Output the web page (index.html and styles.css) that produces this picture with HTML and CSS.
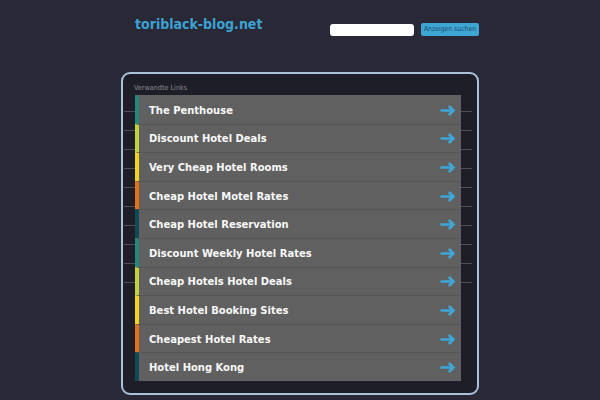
FILE: index.html
```html
<!DOCTYPE html>
<html lang="de">
<head>
<meta charset="utf-8">
<title>toriblack-blog.net</title>
<link rel="stylesheet" href="styles.css">
</head>
<body>
<div class="page">
  <header class="header">
    <div class="title">toriblack-blog.net</div>
    <form class="search">
      <input class="search-input" type="text">
      <button class="search-btn" type="button">Anzeigen suchen</button>
    </form>
  </header>
  <main class="box">
    <div class="label">Verwandte Links</div>
    <div class="lines">
      <ul class="list">
        <li class="row c1"><span class="txt">The Penthouse</span><svg class="arrow" viewBox="0 0 16 11"><path d="M0.5 5.5H13.5M8.8 1L13.5 5.5L8.8 10"/></svg></li>
        <li class="row c2"><span class="txt">Discount Hotel Deals</span><svg class="arrow" viewBox="0 0 16 11"><path d="M0.5 5.5H13.5M8.8 1L13.5 5.5L8.8 10"/></svg></li>
        <li class="row c3"><span class="txt">Very Cheap Hotel Rooms</span><svg class="arrow" viewBox="0 0 16 11"><path d="M0.5 5.5H13.5M8.8 1L13.5 5.5L8.8 10"/></svg></li>
        <li class="row c4"><span class="txt">Cheap Hotel Motel Rates</span><svg class="arrow" viewBox="0 0 16 11"><path d="M0.5 5.5H13.5M8.8 1L13.5 5.5L8.8 10"/></svg></li>
        <li class="row c5"><span class="txt">Cheap Hotel Reservation</span><svg class="arrow" viewBox="0 0 16 11"><path d="M0.5 5.5H13.5M8.8 1L13.5 5.5L8.8 10"/></svg></li>
        <li class="row c1"><span class="txt">Discount Weekly Hotel Rates</span><svg class="arrow" viewBox="0 0 16 11"><path d="M0.5 5.5H13.5M8.8 1L13.5 5.5L8.8 10"/></svg></li>
        <li class="row c2"><span class="txt">Cheap Hotels Hotel Deals</span><svg class="arrow" viewBox="0 0 16 11"><path d="M0.5 5.5H13.5M8.8 1L13.5 5.5L8.8 10"/></svg></li>
        <li class="row c3"><span class="txt">Best Hotel Booking Sites</span><svg class="arrow" viewBox="0 0 16 11"><path d="M0.5 5.5H13.5M8.8 1L13.5 5.5L8.8 10"/></svg></li>
        <li class="row c4"><span class="txt">Cheapest Hotel Rates</span><svg class="arrow" viewBox="0 0 16 11"><path d="M0.5 5.5H13.5M8.8 1L13.5 5.5L8.8 10"/></svg></li>
        <li class="row c5"><span class="txt">Hotel Hong Kong</span><svg class="arrow" viewBox="0 0 16 11"><path d="M0.5 5.5H13.5M8.8 1L13.5 5.5L8.8 10"/></svg></li>
      </ul>
    </div>
  </main>
</div>
</body>
</html>
```
FILE: styles.css
```css
html, body {
  margin: 0;
  padding: 0;
  background: #282837;
  font-family: "DejaVu Sans Condensed", "DejaVu Sans", sans-serif;
}
.page {
  width: 358px;
  margin: 0 auto;
}
.header {
  display: flex;
  height: 72px;
}
.title {
  margin-left: 14px;
  padding-top: 14px;
  font-size: 14px;
  line-height: 20px;
  font-weight: bold;
  color: #3da2d2;
}
.search {
  margin: 0 0 0 auto;
  padding-top: 23px;
  display: flex;
  align-items: flex-start;
  gap: 7px;
}
.search-input {
  margin-top: 1px;
  width: 84px;
  height: 12px;
  border: 0;
  padding: 0;
  border-radius: 3px;
  background: #fff;
}
.search-btn {
  width: 58px;
  height: 13px;
  padding: 0;
  border: 0;
  border-radius: 2px;
  background: #3ea6d5;
  color: #1c4868;
  font-family: "DejaVu Sans Condensed", "DejaVu Sans", sans-serif;
  font-size: 6.8px;
  line-height: 13px;
}
.box {
  box-sizing: border-box;
  height: 323px;
  border: 2px solid #a9c2da;
  border-radius: 9px;
  background: #1e1e29;
}
.label {
  margin: 9px 0 0 11px;
  font-size: 7.2px;
  line-height: 10px;
  color: #8a8a8e;
}
.lines {
  margin: 2px 0 0 1px;
  width: 326px;
  padding: 0 11px;
  background-image: repeating-linear-gradient(to bottom, transparent 0 16px, #4f4f59 16px 17px, transparent 17px 19px);
  background-size: 100% 188px;
  background-repeat: no-repeat;
}
.list {
  list-style: none;
  margin: 0;
  padding: 0;
}
.row {
  box-sizing: border-box;
  height: 28.6px;
  display: flex;
  align-items: center;
  justify-content: space-between;
  background: #606060;
  border-left: 4px solid #2a8a78;
  border-top: 1px solid #565656;
  padding: 1px 5px 0 10px;
}
.row:first-child {
  border-top-color: #606060;
}
.c1 { border-left-color: #25867a; }
.c2 { border-left-color: #c3d23c; }
.c3 { border-left-color: #f1d31f; }
.c4 { border-left-color: #e1701a; }
.c5 { border-left-color: #0e4a58; }
.txt {
  font-size: 11.1px;
  font-weight: bold;
  color: #f8f8f8;
}
.arrow {
  width: 16px;
  height: 11px;
  fill: none;
  stroke: #3ea7d8;
  stroke-width: 2.6;
}
```
